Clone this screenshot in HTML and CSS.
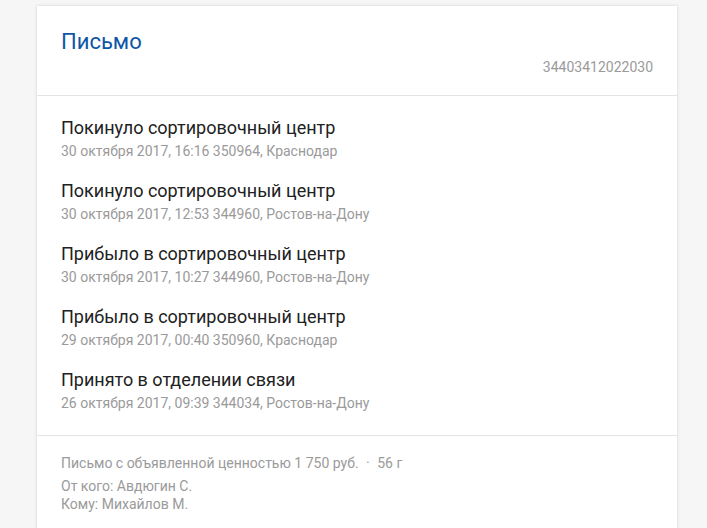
FILE: index.html
```html
<!DOCTYPE html>
<html lang="ru">
<head>
  <meta charset="UTF-8" />
  <meta name="viewport" content="width=device-width, initial-scale=1.0" />
  <title>Отслеживание</title>
  <link rel="stylesheet" href="styles.css">
</head>
<body>
  <div class="card">
    <div class="card-head">
      <h2 class="title">Письмо</h2>
      <div class="barcode">34403412022030</div>
    </div>

    <div class="events">
      <div class="event">
        <div class="event-name">Покинуло сортировочный центр</div>
        <div class="event-info">30 октября 2017, 16:16 350964, Краснодар</div>
      </div>
      <div class="event">
        <div class="event-name">Покинуло сортировочный центр</div>
        <div class="event-info">30 октября 2017, 12:53 344960, Ростов-на-Дону</div>
      </div>
      <div class="event">
        <div class="event-name">Прибыло в сортировочный центр</div>
        <div class="event-info">30 октября 2017, 10:27 344960, Ростов-на-Дону</div>
      </div>
      <div class="event">
        <div class="event-name">Прибыло в сортировочный центр</div>
        <div class="event-info">29 октября 2017, 00:40 350960, Краснодар</div>
      </div>
      <div class="event">
        <div class="event-name">Принято в отделении связи</div>
        <div class="event-info">26 октября 2017, 09:39 344034, Ростов-на-Дону</div>
      </div>
    </div>

    <div class="card-foot">
      <div class="summary">Письмо с объявленной ценностью 1 750 руб. <span class="dot">·</span> 56 г</div>
      <div class="people">
        <div>От кого: Авдюгин С.</div>
        <div>Кому: Михайлов М.</div>
      </div>
    </div>
  </div>
</body>
</html>
```

FILE: styles.css
```css
body {
  font-family: Roboto, 'Noto Sans', sans-serif;
  margin: 0;
  padding: 6px 0 0;
  background-color: #f6f6f6;
}
.card {
  width: 640px;
  margin-left: 37px;
  min-height: 540px;
  background-color: white;
  box-shadow: 0 0 3px rgba(0,0,0,0.15);
}
.card-head {
  padding: 24px 24px 20px;
  border-bottom: 1px solid #e3e3e3;
}
.title {
  margin: 0;
  font-size: 22px;
  line-height: 24px;
  font-weight: normal;
  color: #0d56a6;
}
.barcode {
  margin-top: 5px;
  text-align: right;
  font-size: 14px;
  line-height: 16px;
  color: #9a9a9a;
}
.events {
  padding: 21px 24px;
  border-bottom: 1px solid #e3e3e3;
}
.event + .event {
  margin-top: 18px;
}
.event-name {
  font-size: 18px;
  line-height: 22px;
  color: #212121;
}
.event-info {
  margin-top: 1px;
  font-size: 14px;
  line-height: 22px;
  color: #9a9a9a;
}
.card-foot {
  padding: 18px 24px;
  font-size: 14px;
  line-height: 18px;
  color: #9a9a9a;
}
.dot {
  margin: 0 4px;
}
.people {
  margin-top: 5px;
}
```
